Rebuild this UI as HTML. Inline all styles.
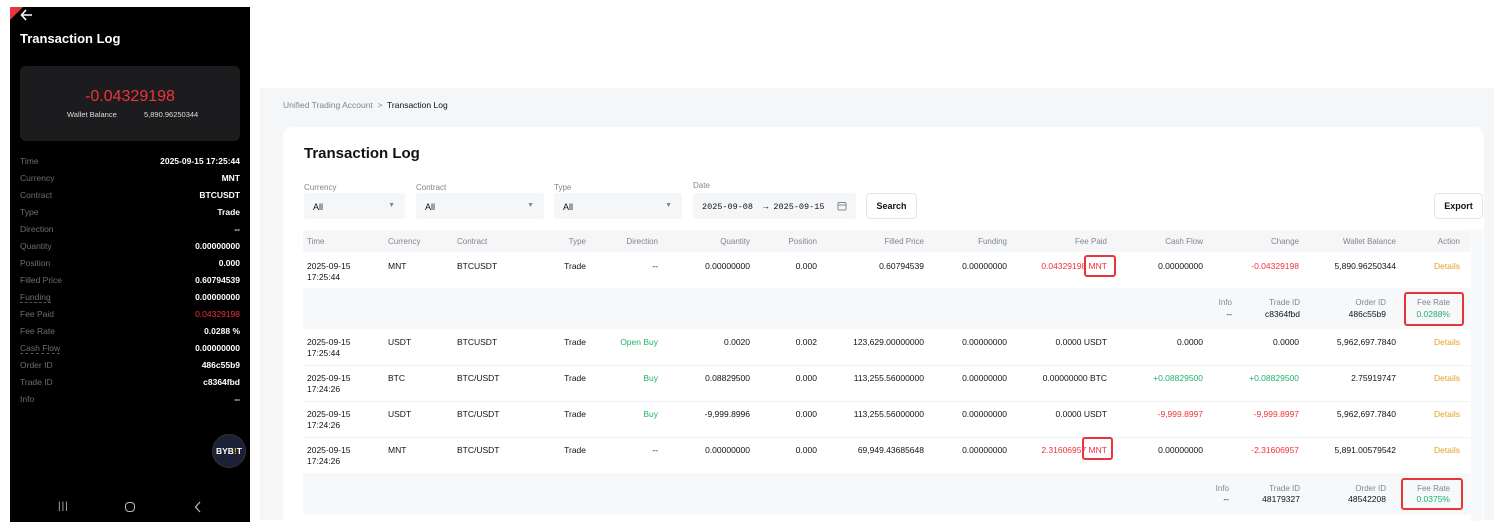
<!DOCTYPE html>
<html><head><meta charset="utf-8"><style>
*{margin:0;padding:0;box-sizing:border-box}
body{width:1494px;height:530px;background:#fff;position:relative;overflow:hidden;font-family:"Liberation Sans",sans-serif}
.a{position:absolute;white-space:nowrap}
#ph{position:absolute;left:10px;top:7px;width:240px;height:515px;background:#000;color:#fff}
.pl{position:absolute;left:10px;font-size:8.5px;color:#6e6e73}
.pv{position:absolute;right:10px;font-size:8.5px;color:#fff;font-weight:bold}
.ul{border-bottom:1px dashed #555}
#bg{position:absolute;left:260px;top:88px;width:1234px;height:432px;background:#f5f6f8}
#card{position:absolute;left:283px;top:127px;width:1201px;height:393px;background:#fff;border-radius:10px 10px 0 0}
.lbl{font-size:8px;color:#81858c}
.sel{position:absolute;top:193px;height:26px;background:#f5f6f8;border-radius:3px;font-size:9px;color:#121214;padding:9px 9px}
.sel i{position:absolute;right:10px;top:9px;font-style:normal;font-size:7px;color:#888}
.btn{position:absolute;height:26px;border:1px solid #e5e6e8;border-radius:4px;background:#fff;font-size:9px;font-weight:bold;color:#121214;text-align:center;line-height:24px}
.th{font-size:8px;color:#81858c}
.td{font-size:8.5px;color:#121214}
.r{color:#f0323c}.g{color:#20b26c}.o{color:#e6a020}
.box{position:absolute;border:2.5px solid #e8353a;border-radius:3px}
</style></head><body>

<div id="ph">
  <div class="a" style="left:0;top:0;width:0;height:0;border-top:13px solid #e8353a;border-right:13px solid transparent"></div>
  <svg class="a" style="left:10px;top:2px" width="14" height="12" viewBox="0 0 14 12"><path d="M12 6H2M6 1L1.5 6 6 11" stroke="#fff" stroke-width="1.6" fill="none"/></svg>
  <div class="a" style="left:10px;top:24px;font-size:13px;font-weight:bold">Transaction Log</div>
  <div class="a" style="left:10px;top:59px;width:220px;height:75px;background:#1c1c1e;border-radius:6px">
    <div class="a" style="left:0;width:220px;text-align:center;top:22px;font-size:16px;color:#f0323c">-0.04329198</div>
    <div class="a" style="left:47px;top:44px;font-size:7.5px;color:#ddd">Wallet Balance</div>
    <div class="a" style="left:124px;top:44px;font-size:7.5px;color:#ddd">5,890.96250344</div>
  </div>
  <div class="pl" style="top:149px">Time</div><div class="pv" style="top:149px">2025-09-15 17:25:44</div>
  <div class="pl" style="top:166px">Currency</div><div class="pv" style="top:166px">MNT</div>
  <div class="pl" style="top:183px">Contract</div><div class="pv" style="top:183px">BTCUSDT</div>
  <div class="pl" style="top:200px">Type</div><div class="pv" style="top:200px">Trade</div>
  <div class="pl" style="top:217px">Direction</div><div class="pv" style="top:217px">--</div>
  <div class="pl" style="top:234px">Quantity</div><div class="pv" style="top:234px">0.00000000</div>
  <div class="pl" style="top:251px">Position</div><div class="pv" style="top:251px">0.000</div>
  <div class="pl" style="top:268px">Filled Price</div><div class="pv" style="top:268px">0.60794539</div>
  <div class="pl ul" style="top:285px">Funding</div><div class="pv" style="top:285px">0.00000000</div>
  <div class="pl" style="top:302px">Fee Paid</div><div class="pv" style="top:302px;color:#f0323c;font-weight:normal">0.04329198</div>
  <div class="pl" style="top:319px">Fee Rate</div><div class="pv" style="top:319px">0.0288 %</div>
  <div class="pl ul" style="top:336px">Cash Flow</div><div class="pv" style="top:336px">0.00000000</div>
  <div class="pl" style="top:353px">Order ID</div><div class="pv" style="top:353px">486c55b9</div>
  <div class="pl" style="top:370px">Trade ID</div><div class="pv" style="top:370px">c8364fbd</div>
  <div class="pl" style="top:387px">Info</div><div class="pv" style="top:387px">--</div>
  <div class="a" style="left:202px;top:427px;width:34px;height:34px;border-radius:50%;background:#1b2036;border:1px solid #333;color:#fff;font-size:8.5px;font-weight:bold;text-align:center;line-height:32px">BYB<span style="color:#f7a600">!</span>T</div>
  <div class="a" style="left:48px;top:494px;font-size:10px;color:#bbb;letter-spacing:1px">|||</div>
  <div class="a" style="left:115px;top:495px;width:10px;height:10px;border:1.3px solid #bbb;border-radius:4px"></div>
  <svg class="a" style="left:184px;top:494px" width="8" height="12" viewBox="0 0 8 12"><path d="M6 1L1.5 6 6 11" stroke="#bbb" stroke-width="1.2" fill="none"/></svg>
</div>

<div id="bg"></div>
<div class="a" style="left:283px;top:100px;font-size:8.5px;color:#81858c">Unified Trading Account &nbsp;&gt;&nbsp; <span style="color:#121214">Transaction Log</span></div>
<div id="card"></div>
<div class="a" style="left:304px;top:145px;font-size:15px;font-weight:bold;color:#121214">Transaction Log</div>

<div class="a lbl" style="left:304px;top:183px">Currency</div>
<div class="a lbl" style="left:416px;top:183px">Contract</div>
<div class="a lbl" style="left:554px;top:183px">Type</div>
<div class="a lbl" style="left:693px;top:181px">Date</div>
<div class="sel" style="left:304px;width:101px">All<i>▼</i></div>
<div class="sel" style="left:416px;width:128px">All<i>▼</i></div>
<div class="sel" style="left:554px;width:128px">All<i>▼</i></div>
<div class="sel" style="left:693px;width:163px;font-family:'Liberation Mono',monospace;font-size:8.5px">2025-09-08 &nbsp;→ 2025-09-15
  <svg style="position:absolute;right:9px;top:8px" width="10" height="10" viewBox="0 0 10 10"><rect x="1" y="1.5" width="8" height="7.5" rx="1" stroke="#888" fill="none"/><path d="M1 4h8" stroke="#888"/></svg></div>
<div class="btn" style="left:866px;top:193px;width:51px">Search</div>
<div class="btn" style="left:1434px;top:193px;width:49px">Export</div>

<div class="a" style="left:303px;top:230px;width:1167px;height:22px;background:#f5f6f8"></div>
<div class="a" style="left:1471px;top:229px;width:12px;height:292px;background:#f7f8fa"></div>
<div class="a" style="left:303px;top:288px;width:1167px;height:41px;background:#f7f8fa"></div>
<div class="a" style="left:303px;top:473px;width:1167px;height:42px;background:#f7f8fa"></div>
<div class="a" style="left:303px;top:365px;width:1167px;height:1px;background:#f0f1f2"></div>
<div class="a" style="left:303px;top:401px;width:1167px;height:1px;background:#f0f1f2"></div>
<div class="a" style="left:303px;top:437px;width:1167px;height:1px;background:#f0f1f2"></div>

<div class="a th" style="left:307px;top:237px">Time</div>
<div class="a th" style="left:388px;top:237px">Currency</div>
<div class="a th" style="left:457px;top:237px">Contract</div>
<div class="a th" style="right:908px;top:237px">Type</div>
<div class="a th" style="right:836px;top:237px">Direction</div>
<div class="a th" style="right:744px;top:237px">Quantity</div>
<div class="a th" style="right:677px;top:237px">Position</div>
<div class="a th" style="right:570px;top:237px">Filled Price</div>
<div class="a th" style="right:487px;top:237px">Funding</div>
<div class="a th" style="right:387px;top:237px">Fee Paid</div>
<div class="a th" style="right:291px;top:237px">Cash Flow</div>
<div class="a th" style="right:195px;top:237px">Change</div>
<div class="a th" style="right:98px;top:237px">Wallet Balance</div>
<div class="a th" style="right:34px;top:237px">Action</div>

<!-- rows -->
<div class="a td" style="left:307px;top:261px;line-height:11px">2025-09-15<br>17:25:44</div>
<div class="a td" style="left:388px;top:261px">MNT</div><div class="a td" style="left:457px;top:261px">BTCUSDT</div>
<div class="a td" style="right:908px;top:261px">Trade</div><div class="a td" style="right:836px;top:261px">--</div>
<div class="a td" style="right:744px;top:261px">0.00000000</div><div class="a td" style="right:677px;top:261px">0.000</div>
<div class="a td" style="right:570px;top:261px">0.60794539</div><div class="a td" style="right:487px;top:261px">0.00000000</div>
<div class="a td r" style="right:387px;top:261px">0.04329198 MNT</div><div class="a td" style="right:291px;top:261px">0.00000000</div>
<div class="a td r" style="right:195px;top:261px">-0.04329198</div><div class="a td" style="right:98px;top:261px">5,890.96250344</div>
<div class="a td o" style="right:34px;top:261px">Details</div>

<div class="a th" style="right:262px;top:298px">Info</div><div class="a td" style="right:262px;top:309px">--</div>
<div class="a th" style="right:194px;top:298px">Trade ID</div><div class="a td" style="right:194px;top:309px">c8364fbd</div>
<div class="a th" style="right:108px;top:298px">Order ID</div><div class="a td" style="right:108px;top:309px">486c55b9</div>
<div class="a th" style="right:44px;top:298px">Fee Rate</div><div class="a td g" style="right:44px;top:309px">0.0288%</div>

<div class="a td" style="left:307px;top:337px;line-height:11px">2025-09-15<br>17:25:44</div>
<div class="a td" style="left:388px;top:337px">USDT</div><div class="a td" style="left:457px;top:337px">BTCUSDT</div>
<div class="a td" style="right:908px;top:337px">Trade</div><div class="a td g" style="right:836px;top:337px">Open Buy</div>
<div class="a td" style="right:744px;top:337px">0.0020</div><div class="a td" style="right:677px;top:337px">0.002</div>
<div class="a td" style="right:570px;top:337px">123,629.00000000</div><div class="a td" style="right:487px;top:337px">0.00000000</div>
<div class="a td" style="right:387px;top:337px">0.0000 USDT</div><div class="a td" style="right:291px;top:337px">0.0000</div>
<div class="a td" style="right:195px;top:337px">0.0000</div><div class="a td" style="right:98px;top:337px">5,962,697.7840</div>
<div class="a td o" style="right:34px;top:337px">Details</div>

<div class="a td" style="left:307px;top:373px;line-height:11px">2025-09-15<br>17:24:26</div>
<div class="a td" style="left:388px;top:373px">BTC</div><div class="a td" style="left:457px;top:373px">BTC/USDT</div>
<div class="a td" style="right:908px;top:373px">Trade</div><div class="a td g" style="right:836px;top:373px">Buy</div>
<div class="a td" style="right:744px;top:373px">0.08829500</div><div class="a td" style="right:677px;top:373px">0.000</div>
<div class="a td" style="right:570px;top:373px">113,255.56000000</div><div class="a td" style="right:487px;top:373px">0.00000000</div>
<div class="a td" style="right:387px;top:373px">0.00000000 BTC</div><div class="a td g" style="right:291px;top:373px">+0.08829500</div>
<div class="a td g" style="right:195px;top:373px">+0.08829500</div><div class="a td" style="right:98px;top:373px">2.75919747</div>
<div class="a td o" style="right:34px;top:373px">Details</div>

<div class="a td" style="left:307px;top:409px;line-height:11px">2025-09-15<br>17:24:26</div>
<div class="a td" style="left:388px;top:409px">USDT</div><div class="a td" style="left:457px;top:409px">BTC/USDT</div>
<div class="a td" style="right:908px;top:409px">Trade</div><div class="a td g" style="right:836px;top:409px">Buy</div>
<div class="a td" style="right:744px;top:409px">-9,999.8996</div><div class="a td" style="right:677px;top:409px">0.000</div>
<div class="a td" style="right:570px;top:409px">113,255.56000000</div><div class="a td" style="right:487px;top:409px">0.00000000</div>
<div class="a td" style="right:387px;top:409px">0.0000 USDT</div><div class="a td r" style="right:291px;top:409px">-9,999.8997</div>
<div class="a td r" style="right:195px;top:409px">-9,999.8997</div><div class="a td" style="right:98px;top:409px">5,962,697.7840</div>
<div class="a td o" style="right:34px;top:409px">Details</div>

<div class="a td" style="left:307px;top:445px;line-height:11px">2025-09-15<br>17:24:26</div>
<div class="a td" style="left:388px;top:445px">MNT</div><div class="a td" style="left:457px;top:445px">BTC/USDT</div>
<div class="a td" style="right:908px;top:445px">Trade</div><div class="a td" style="right:836px;top:445px">--</div>
<div class="a td" style="right:744px;top:445px">0.00000000</div><div class="a td" style="right:677px;top:445px">0.000</div>
<div class="a td" style="right:570px;top:445px">69,949.43685648</div><div class="a td" style="right:487px;top:445px">0.00000000</div>
<div class="a td r" style="right:387px;top:445px">2.31606957 MNT</div><div class="a td" style="right:291px;top:445px">0.00000000</div>
<div class="a td r" style="right:195px;top:445px">-2.31606957</div><div class="a td" style="right:98px;top:445px">5,891.00579542</div>
<div class="a td o" style="right:34px;top:445px">Details</div>

<div class="a th" style="right:265px;top:484px">Info</div><div class="a td" style="right:265px;top:494px">--</div>
<div class="a th" style="right:194px;top:484px">Trade ID</div><div class="a td" style="right:194px;top:494px">48179327</div>
<div class="a th" style="right:108px;top:484px">Order ID</div><div class="a td" style="right:108px;top:494px">48542208</div>
<div class="a th" style="right:44px;top:484px">Fee Rate</div><div class="a td g" style="right:44px;top:494px">0.0375%</div>

<div class="box" style="left:1084px;top:255px;width:32px;height:22px"></div>
<div class="box" style="left:1082px;top:437px;width:31px;height:23px"></div>
<div class="box" style="left:1404px;top:292px;width:60px;height:34px"></div>
<div class="box" style="left:1401px;top:478px;width:62px;height:32px"></div>
</body></html>
